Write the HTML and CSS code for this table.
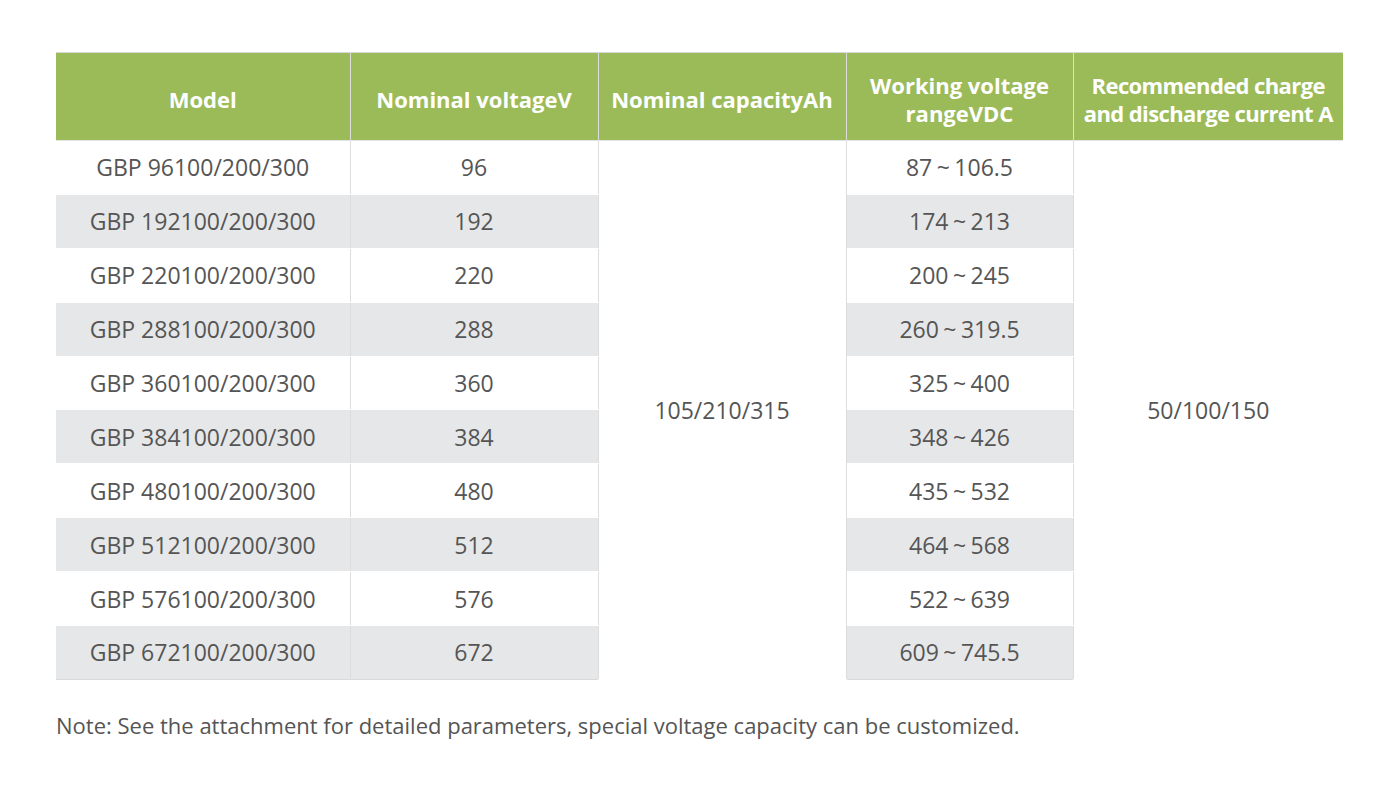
FILE: index.html
```html
<!DOCTYPE html>
<html>
<head>
<meta charset="utf-8">
<link rel="stylesheet" href="styles.css">
</head>
<body>
<div class="wrap">
<table class="spec">
<colgroup>
<col class="c1"><col class="c2"><col class="c3"><col class="c4"><col class="c5">
</colgroup>
<thead>
<tr>
<th>Model</th>
<th>Nominal voltageV</th>
<th>Nominal capacityAh</th>
<th>Working voltage<br>rangeVDC</th>
<th class="last tight">Recommended charge<br>and discharge current A</th>
</tr>
</thead>
<tbody>
<tr><td>GBP 96100/200/300</td><td>96</td><td class="merged" rowspan="10">105/210/315</td><td class="rng">87 ~ 106.5</td><td class="merged last" rowspan="10">50/100/150</td></tr>
<tr class="alt"><td>GBP 192100/200/300</td><td>192</td><td class="rng">174 ~ 213</td></tr>
<tr><td>GBP 220100/200/300</td><td>220</td><td class="rng">200 ~ 245</td></tr>
<tr class="alt"><td>GBP 288100/200/300</td><td>288</td><td class="rng">260 ~ 319.5</td></tr>
<tr><td>GBP 360100/200/300</td><td>360</td><td class="rng">325 ~ 400</td></tr>
<tr class="alt"><td>GBP 384100/200/300</td><td>384</td><td class="rng">348 ~ 426</td></tr>
<tr><td>GBP 480100/200/300</td><td>480</td><td class="rng">435 ~ 532</td></tr>
<tr class="alt"><td>GBP 512100/200/300</td><td>512</td><td class="rng">464 ~ 568</td></tr>
<tr><td>GBP 576100/200/300</td><td>576</td><td class="rng">522 ~ 639</td></tr>
<tr class="alt"><td>GBP 672100/200/300</td><td>672</td><td class="rng">609 ~ 745.5</td></tr>
</tbody>
</table>
<p class="note">Note: See the attachment for detailed parameters, special voltage capacity can be customized.</p>
</div>
</body>
</html>
```
FILE: styles.css
```css
html, body {
  margin: 0;
  padding: 0;
  background: #ffffff;
}
body {
  font-family: "Open Sans", "Noto Sans", "Liberation Sans", sans-serif;
  color: #555555;
}
.wrap {
  padding: 52px 0 0 56px;
  width: 1287px;
}
.spec {
  width: 1287px;
  border-collapse: collapse;
  table-layout: fixed;
  border-top: 1px solid #d9d9d9;
  border-bottom: 1px solid #d9d9d9;
}
.c1 { width: 294px; }
.c2 { width: 248px; }
.c3 { width: 248px; }
.c4 { width: 227px; }
.c5 { width: 270px; }
.spec th {
  background: #9bbb59;
  color: #ffffff;
  font-weight: 700;
  font-size: 22px;
  line-height: 28px;
  height: 88px;
  padding: 4px 0 0 0;
  box-sizing: border-box;
  text-align: center;
  vertical-align: middle;
  border-right: 1px solid #dcdcdc;
  border-bottom: 1px solid #e4e4e4;
}
.spec th.tight {
  letter-spacing: -0.6px;
}
.spec tbody tr {
  height: 53.9px;
}
.spec td {
  padding: 0;
  font-size: 23px;
  line-height: 30px;
  text-align: center;
  vertical-align: middle;
  border-right: 1px solid #dcdcdc;
  border-bottom: 1px solid #ffffff;
  background: #ffffff;
}
.spec td.rng {
  word-spacing: -1.5px;
}
.spec tr.alt td {
  background: #e6e7e8;
}
.spec td.merged {
  background: #ffffff;
}
.spec .last {
  border-right: none;
}
.spec tbody tr:last-child td {
  border-bottom: none;
}
.note {
  margin: 30px 0 0 0;
  font-size: 22px;
  color: #555555;
}
```
